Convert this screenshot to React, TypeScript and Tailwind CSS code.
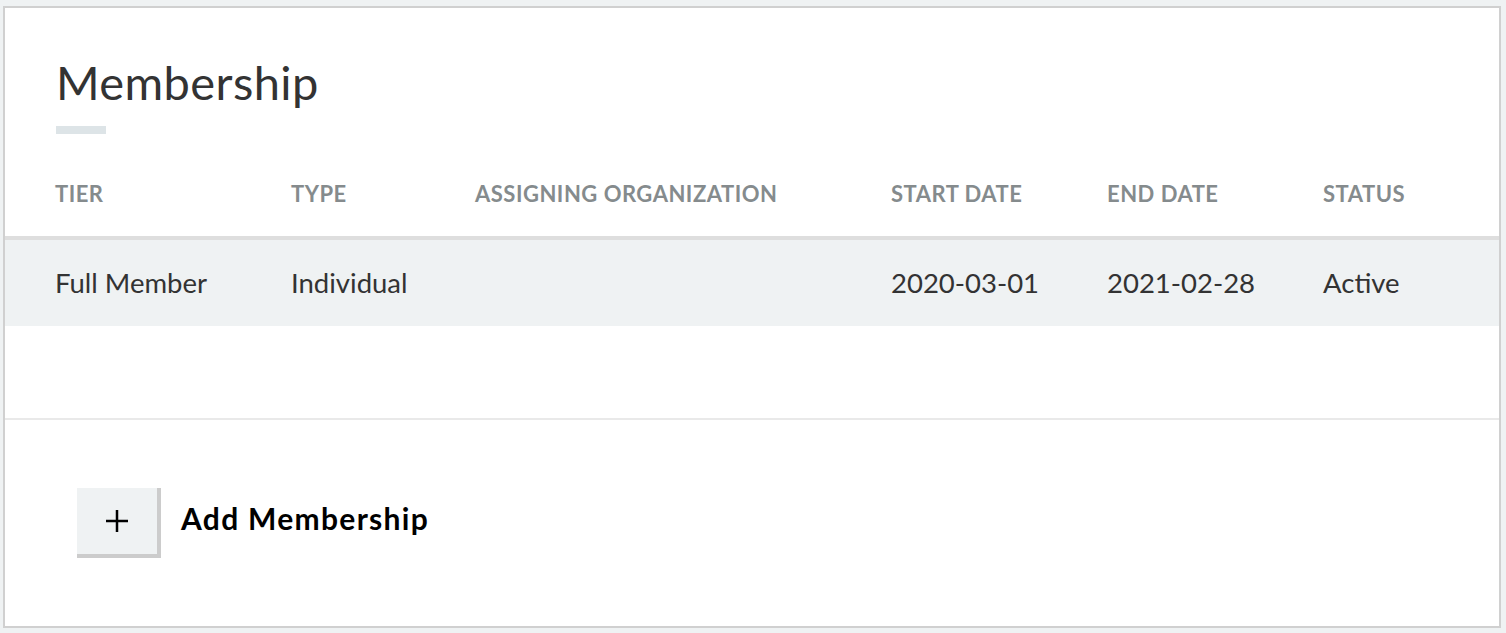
import React from 'react';

interface Membership {
  tier: string;
  type: string;
  organization: string;
  startDate: string;
  endDate: string;
  status: string;
}

const columns = [
  { key: 'tier', label: 'Tier', width: 'w-[236px]' },
  { key: 'type', label: 'Type', width: 'w-[184px]' },
  { key: 'organization', label: 'Assigning Organization', width: 'w-[416px]' },
  { key: 'startDate', label: 'Start Date', width: 'w-[216px]' },
  { key: 'endDate', label: 'End Date', width: 'w-[216px]' },
  { key: 'status', label: 'Status', width: 'flex-1' },
] as const;

const memberships: Membership[] = [
  {
    tier: 'Full Member',
    type: 'Individual',
    organization: '',
    startDate: '2020-03-01',
    endDate: '2021-02-28',
    status: 'Active',
  },
];

const App: React.FC = () => {
  return (
    <div className="min-h-screen bg-[#eff2f3] pt-[6px] pl-[3px] pr-[5px] font-['Lato',sans-serif]">
      <div className="h-[622px] border-2 border-[#d0d0d0] bg-white flex flex-col">
        <div className="pl-[51px]">
          <h2 className="mt-[51px] text-[47px] leading-none tracking-[0.4px] font-normal text-[#333333]">
            Membership
          </h2>
          <div className="mt-[20px] h-[8px] w-[50px] bg-[#dde4e7]" />
        </div>

        <div className="h-[106px] flex items-end pb-[31px] pl-[50px] border-b-[4px] border-[#dedede]">
          {columns.map((col) => (
            <div
              key={col.key}
              className={`${col.width} text-[22px] leading-[22px] tracking-[0.5px] font-bold uppercase text-[#858b8d]`}
            >
              {col.label}
            </div>
          ))}
        </div>

        {memberships.map((m, i) => (
          <div key={i} className="h-[86px] flex items-center pl-[50px] bg-[#eff2f3]">
            {columns.map((col) => (
              <div key={col.key} className={`${col.width} text-[27.5px] leading-[28px] text-[#333333]`}>
                {m[col.key]}
              </div>
            ))}
          </div>
        ))}

        <div className="h-[94px] border-b-2 border-[#e9e9e9]" />

        <div className="pt-[68px] pl-[72px] flex items-center gap-[20px]">
          <button
            type="button"
            className="w-[84px] h-[70px] bg-[#eff2f3] border-r-[4px] border-b-[4px] border-[#cccccc] flex items-center justify-center"
          >
            <svg width="24" height="24" viewBox="0 0 24 24" className="text-black">
              <path d="M12 1v22M1 12h22" stroke="currentColor" strokeWidth="2.5" />
            </svg>
          </button>
          <span className="pb-[10px] text-[30px] leading-[36px] tracking-[1.3px] font-bold text-black">
            Add Membership
          </span>
        </div>
      </div>
    </div>
  );
};

export default App;
